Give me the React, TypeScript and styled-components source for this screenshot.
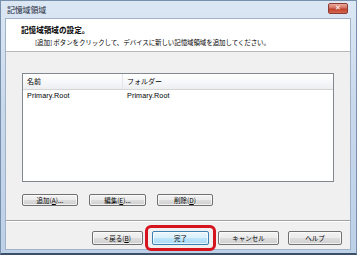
import styled, { createGlobalStyle } from 'styled-components'

const GlobalStyle = createGlobalStyle`
  html, body {
    margin: 0;
    padding: 0;
    width: 357px;
    height: 255px;
    overflow: hidden;
    background: #ffffff;
  }
  * {
    box-sizing: border-box;
  }
`

const FONT = `"Noto Sans CJK JP", "Liberation Sans", sans-serif`

const Window = styled.div`
  width: 357px;
  height: 255px;
  display: flex;
  flex-direction: column;
  background: linear-gradient(180deg, #dce7f4 0%, #c9d9ec 40%, #bcd0e8 100%);
  border: 1px solid #7990ad;
  border-bottom: 2px solid #3d4f66;
  font-family: ${FONT};
  color: #000;
`

const TitleBar = styled.div`
  height: 17px;
  flex: none;
  display: flex;
  align-items: center;
  justify-content: space-between;
  padding: 0 8px 0 6px;
`

const TitleText = styled.span`
  font-size: 8px;
  color: #1e2a3a;
  letter-spacing: -0.2px;
`

const CloseButton = styled.div`
  width: 20px;
  height: 11px;
  margin-top: -2px;
  border-radius: 2px;
  border: 1px solid #8a3c35;
  background: linear-gradient(180deg, #e9a99c 0%, #d4705f 45%, #c0402c 55%, #d3684f 100%);
  display: flex;
  align-items: center;
  justify-content: center;
  color: #fff;
  font-size: 7px;
  font-weight: bold;
  font-family: "DejaVu Sans", sans-serif;
  line-height: 1;
`

const Client = styled.div`
  flex: 1;
  margin: 0 5px 3px 4px;
  display: flex;
  flex-direction: column;
  background: #f0f0f0;
  border: 1px solid #a3b3c7;
`

const Header = styled.div`
  height: 33px;
  flex: none;
  background: #ffffff;
  border-bottom: 1px solid #b9b9b9;
  padding: 5px 0 0 15px;
  display: flex;
  flex-direction: column;
  gap: 2px;
`

const HeaderTitle = styled.div`
  font-size: 7.6px;
  font-weight: bold;
  line-height: 11px;
`

const HeaderText = styled.div`
  font-size: 6.5px;
  line-height: 10px;
  padding-left: 14px;
  white-space: nowrap;
  letter-spacing: -0.1px;
`

const Body = styled.div`
  flex: none;
  display: flex;
  flex-direction: column;
  padding: 21px 16px 0 16px;
`

const ListBox = styled.div`
  height: 109px;
  background: #ffffff;
  border: 1px solid #828790;
  display: flex;
  flex-direction: column;
`

const ListHeader = styled.div`
  height: 16px;
  display: grid;
  grid-template-columns: 100px 1fr;
  background: linear-gradient(180deg, #ffffff 0%, #f5f6f8 60%, #eceef1 100%);
  border-bottom: 1px solid #d5d5d5;
`

const HeaderCell = styled.div<{ $divider?: boolean }>`
  font-size: 7px;
  line-height: 15px;
  padding-left: 4px;
  border-right: ${({ $divider }) => ($divider ? '1px solid #e3e5e8' : 'none')};
`

const ListRow = styled.div`
  display: grid;
  grid-template-columns: 100px 1fr;
  height: 12px;
`

const Cell = styled.div`
  font-family: "Liberation Sans", sans-serif;
  font-size: 7.2px;
  line-height: 12px;
  padding-left: 4px;
  letter-spacing: 0.1px;
`

const ActionRow = styled.div`
  display: flex;
  gap: 11px;
  margin-top: 12px;
`

const Button = styled.div<{ $width: number; $default?: boolean }>`
  width: ${({ $width }) => $width}px;
  height: ${({ $default }) => ($default ? 14 : 12)}px;
  display: flex;
  align-items: center;
  justify-content: center;
  font-size: 6.5px;
  border-radius: 2px;
  border: 1px solid ${({ $default }) => ($default ? '#3c7fb1' : '#707070')};
  background: ${({ $default }) =>
    $default
      ? 'linear-gradient(180deg, #eaf6fd 0%, #d9f0fc 50%, #bee6fd 51%, #a7d9f5 100%)'
      : 'linear-gradient(180deg, #f2f2f2 0%, #ebebeb 50%, #dddddd 51%, #cfcfcf 100%)'};
  box-shadow: inset 0 0 0 1px rgba(255, 255, 255, 0.7);
  white-space: nowrap;
`

const Separator = styled.div`
  height: 1px;
  background: #a0a0a0;
  border-bottom: 1px solid #ffffff;
  margin-top: 14px;
  flex: none;
  box-sizing: content-box;
`

const Footer = styled.div`
  flex: 1;
  display: flex;
  justify-content: flex-end;
  align-items: flex-start;
  gap: 9px;
  padding: 9px 8px 0 0;
`

const StandardButton = styled(Button)`
  height: 14px;
`

const Highlight = styled.div`
  position: relative;
  display: flex;

  &::after {
    content: '';
    position: absolute;
    left: -7px;
    right: -7px;
    top: -6px;
    bottom: -6px;
    border: 3px solid #d6141e;
    border-radius: 6px;
    pointer-events: none;
  }
`

const App = () => (
  <>
    <GlobalStyle />
    <Window>
      <TitleBar>
        <TitleText>記憶域領域</TitleText>
        <CloseButton>✕</CloseButton>
      </TitleBar>
      <Client>
        <Header>
          <HeaderTitle>記憶域領域の設定。</HeaderTitle>
          <HeaderText>[追加] ボタンをクリックして、デバイスに新しい記憶域領域を追加してください。</HeaderText>
        </Header>
        <Body>
          <ListBox>
            <ListHeader>
              <HeaderCell $divider>名前</HeaderCell>
              <HeaderCell>フォルダー</HeaderCell>
            </ListHeader>
            <ListRow>
              <Cell>Primary.Root</Cell>
              <Cell>Primary.Root</Cell>
            </ListRow>
          </ListBox>
          <ActionRow>
            <Button $width={56}>追加(<u>A</u>)...</Button>
            <Button $width={57}>編集(<u>E</u>)...</Button>
            <Button $width={56}>削除(<u>D</u>)</Button>
          </ActionRow>
        </Body>
        <Separator />
        <Footer>
          <StandardButton $width={51}>&lt; 戻る(<u>B</u>)</StandardButton>
          <Highlight>
            <StandardButton $width={57} $default>完了</StandardButton>
          </Highlight>
          <StandardButton $width={61}>キャンセル</StandardButton>
          <StandardButton $width={54}>ヘルプ</StandardButton>
        </Footer>
      </Client>
    </Window>
  </>
)

export default App
